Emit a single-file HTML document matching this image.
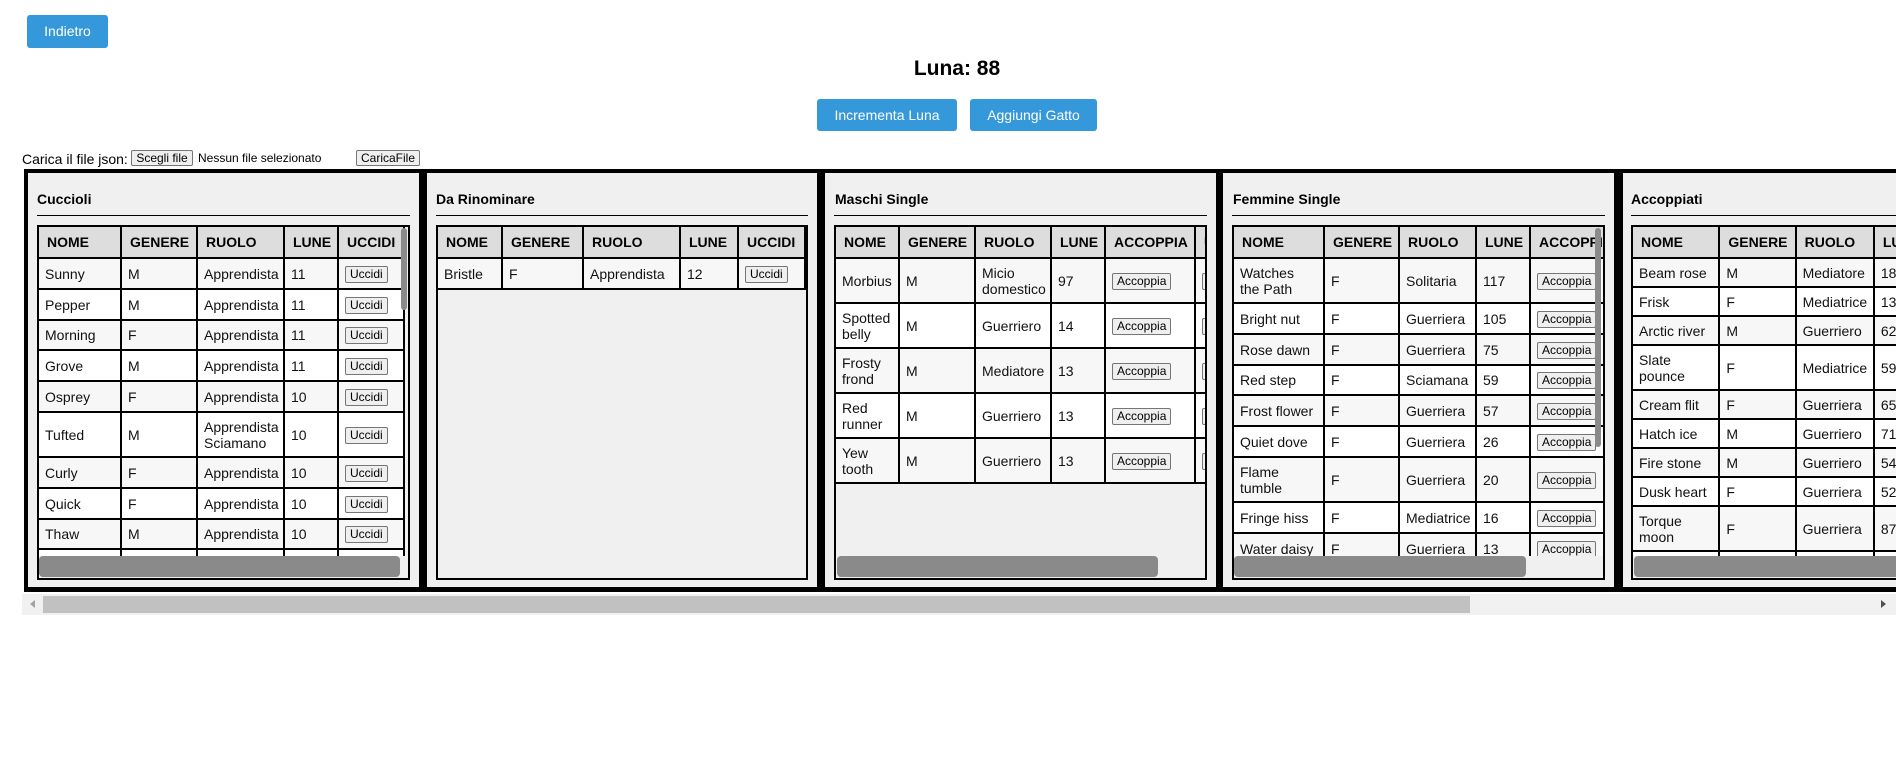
<!DOCTYPE html>
<html><head><meta charset="utf-8">
<style>
*{box-sizing:border-box}
body{margin:0;width:1896px;height:772px;overflow:hidden;background:#fff;font-family:"Liberation Sans",Arial,sans-serif;color:#000;position:relative}
.bb{position:absolute;background:#3498db;color:#fff;font-size:14px;border-radius:3px;text-align:center;line-height:32px}
.luna{position:absolute;left:0;width:1914px;top:57px;text-align:center;font-size:21px;font-weight:bold}
.frow{position:absolute;left:22px;top:151px;font-size:14px;line-height:16px}
.nb{position:absolute;top:150px;height:16px;border:1px solid #767676;background:#efefef;font-size:12px;line-height:14px;text-align:center;border-radius:2px}
.cont{position:absolute;left:24px;top:169px;width:1872px;height:423px;background:#000;overflow:hidden}
.panel{position:absolute;top:4px;height:414px;background:#f0f0f0}
.title{position:absolute;left:9px;top:19px;font-size:14px;font-weight:bold;line-height:15px}
.rule{position:absolute;left:9px;top:42px;height:1px;background:#000}
.wrap{position:absolute;left:9px;top:52px;height:355px;border:2px solid #000;background:#f0f0f0;overflow:hidden}
.sc{position:absolute;left:0;top:0;height:329px;overflow:hidden;width:100%}
table{border-collapse:separate;border-spacing:0;table-layout:fixed;font-size:14px}
th,td{border-right:2px solid #000;border-bottom:2px solid #000;white-space:nowrap;vertical-align:middle;text-align:left;overflow:hidden}
th{background:#ddd;padding:8px 8px 7px;font-weight:bold;line-height:15px}
td{padding:6px 6px 5px;color:#111;line-height:16px}
tbody tr:nth-child(odd) td{background:#f7f7f7}
tbody tr:nth-child(even) td{background:#fff}
.b{display:inline-block;vertical-align:middle;border:1px solid #767676;background:#efefef;font-size:12px;line-height:13px;padding:1px 4px;border-radius:2px;color:#000}
.hth{position:absolute;left:0;top:329px;height:21px;background:#8a8a8a;border-radius:4px}
.vth{position:absolute;right:1px;top:1px;width:6px;background:#8a8a8a;border-radius:3px}
</style></head><body>
<div class="bb" style="left:27px;top:15px;width:81px;height:33px;line-height:33px">Indietro</div>
<div class="luna">Luna: 88</div>
<div class="bb" style="left:817px;top:99px;width:140px;height:32px">Incrementa Luna</div>
<div class="bb" style="left:970px;top:99px;width:127px;height:32px">Aggiungi Gatto</div>
<div class="frow">Carica il file json:</div>
<div class="nb" style="left:131px;width:62px">Scegli file</div>
<div style="position:absolute;left:198px;top:151px;font-size:12px;line-height:14px">Nessun file selezionato</div>
<div class="nb" style="left:356px;width:64px">CaricaFile</div>

<div class="cont">
<div class="panel" style="left:4px;width:391px">
<div class="title">Cuccioli</div><div class="rule" style="width:373px"></div>
<div class="wrap" style="width:373px"><div class="sc">
<table style="width:366px"><colgroup><col style="width:83px"><col style="width:76px"><col style="width:87px"><col style="width:54px"><col style="width:66px"></colgroup>
<thead><tr><th>NOME</th><th>GENERE</th><th>RUOLO</th><th>LUNE</th><th>UCCIDI</th></tr></thead>
<tbody>
<tr><td>Sunny</td><td>M</td><td>Apprendista</td><td>11</td><td><span class="b">Uccidi</span></td></tr>
<tr><td>Pepper</td><td>M</td><td>Apprendista</td><td>11</td><td><span class="b">Uccidi</span></td></tr>
<tr><td>Morning</td><td>F</td><td>Apprendista</td><td>11</td><td><span class="b">Uccidi</span></td></tr>
<tr><td>Grove</td><td>M</td><td>Apprendista</td><td>11</td><td><span class="b">Uccidi</span></td></tr>
<tr><td>Osprey</td><td>F</td><td>Apprendista</td><td>10</td><td><span class="b">Uccidi</span></td></tr>
<tr><td>Tufted</td><td>M</td><td>Apprendista<br>Sciamano</td><td>10</td><td><span class="b">Uccidi</span></td></tr>
<tr><td>Curly</td><td>F</td><td>Apprendista</td><td>10</td><td><span class="b">Uccidi</span></td></tr>
<tr><td>Quick</td><td>F</td><td>Apprendista</td><td>10</td><td><span class="b">Uccidi</span></td></tr>
<tr><td>Thaw</td><td>M</td><td>Apprendista</td><td>10</td><td><span class="b">Uccidi</span></td></tr>
<tr><td>Bold</td><td>F</td><td>Apprendista</td><td>10</td><td><span class="b">Uccidi</span></td></tr>
</tbody></table></div>
<div class="vth" style="height:82px"></div>
<div class="hth" style="width:361px"></div>
</div></div>

<div class="panel" style="left:403px;width:390px">
<div class="title">Da Rinominare</div><div class="rule" style="width:372px"></div>
<div class="wrap" style="width:372px"><div class="sc">
<table style="width:368px"><colgroup><col style="width:65px"><col style="width:81px"><col style="width:97px"><col style="width:58px"><col style="width:67px"></colgroup>
<thead><tr><th>NOME</th><th>GENERE</th><th>RUOLO</th><th>LUNE</th><th>UCCIDI</th></tr></thead>
<tbody><tr><td>Bristle</td><td>F</td><td>Apprendista</td><td>12</td><td><span class="b">Uccidi</span></td></tr></tbody></table></div>
</div></div>

<div class="panel" style="left:801px;width:391px">
<div class="title" style="left:10px">Maschi Single</div><div class="rule" style="width:373px"></div>
<div class="wrap" style="width:373px"><div class="sc">
<table style="width:430px"><colgroup><col style="width:64px"><col style="width:76px"><col style="width:76px"><col style="width:54px"><col style="width:90px"><col style="width:70px"></colgroup>
<thead><tr><th>NOME</th><th>GENERE</th><th>RUOLO</th><th>LUNE</th><th>ACCOPPIA</th><th>UCCIDI</th></tr></thead>
<tbody>
<tr><td>Morbius</td><td>M</td><td>Micio<br>domestico</td><td>97</td><td><span class="b">Accoppia</span></td><td><span class="b">Uccidi</span></td></tr>
<tr><td>Spotted<br>belly</td><td>M</td><td>Guerriero</td><td>14</td><td><span class="b">Accoppia</span></td><td><span class="b">Uccidi</span></td></tr>
<tr><td>Frosty<br>frond</td><td>M</td><td>Mediatore</td><td>13</td><td><span class="b">Accoppia</span></td><td><span class="b">Uccidi</span></td></tr>
<tr><td>Red<br>runner</td><td>M</td><td>Guerriero</td><td>13</td><td><span class="b">Accoppia</span></td><td><span class="b">Uccidi</span></td></tr>
<tr><td>Yew<br>tooth</td><td>M</td><td>Guerriero</td><td>13</td><td><span class="b">Accoppia</span></td><td><span class="b">Uccidi</span></td></tr>
</tbody></table></div>
<div class="hth" style="left:1px;width:321px"></div>
</div></div>

<div class="panel" style="left:1199px;width:391px">
<div class="title" style="left:10px">Femmine Single</div><div class="rule" style="width:373px"></div>
<div class="wrap" style="width:373px"><div class="sc">
<table style="width:457px"><colgroup><col style="width:91px"><col style="width:75px"><col style="width:77px"><col style="width:54px"><col style="width:90px"><col style="width:70px"></colgroup>
<thead><tr><th>NOME</th><th>GENERE</th><th>RUOLO</th><th>LUNE</th><th>ACCOPPIA</th><th>UCCIDI</th></tr></thead>
<tbody>
<tr><td>Watches<br>the Path</td><td>F</td><td>Solitaria</td><td>117</td><td><span class="b">Accoppia</span></td><td><span class="b">Uccidi</span></td></tr>
<tr><td>Bright nut</td><td>F</td><td>Guerriera</td><td>105</td><td><span class="b">Accoppia</span></td><td><span class="b">Uccidi</span></td></tr>
<tr><td>Rose dawn</td><td>F</td><td>Guerriera</td><td>75</td><td><span class="b">Accoppia</span></td><td><span class="b">Uccidi</span></td></tr>
<tr><td>Red step</td><td>F</td><td>Sciamana</td><td>59</td><td><span class="b">Accoppia</span></td><td><span class="b">Uccidi</span></td></tr>
<tr><td>Frost flower</td><td>F</td><td>Guerriera</td><td>57</td><td><span class="b">Accoppia</span></td><td><span class="b">Uccidi</span></td></tr>
<tr><td>Quiet dove</td><td>F</td><td>Guerriera</td><td>26</td><td><span class="b">Accoppia</span></td><td><span class="b">Uccidi</span></td></tr>
<tr><td>Flame<br>tumble</td><td>F</td><td>Guerriera</td><td>20</td><td><span class="b">Accoppia</span></td><td><span class="b">Uccidi</span></td></tr>
<tr><td>Fringe hiss</td><td>F</td><td>Mediatrice</td><td>16</td><td><span class="b">Accoppia</span></td><td><span class="b">Uccidi</span></td></tr>
<tr><td>Water daisy</td><td>F</td><td>Guerriera</td><td>13</td><td><span class="b">Accoppia</span></td><td><span class="b">Uccidi</span></td></tr>
<tr><td>Sun fall</td><td>F</td><td>Guerriera</td><td>12</td><td><span class="b">Accoppia</span></td><td><span class="b">Uccidi</span></td></tr>
</tbody></table></div>
<div class="vth" style="height:219px;right:2px"></div>
<div class="hth" style="left:0;width:292px"></div>
</div></div>

<div class="panel" style="left:1599px;width:420px">
<div class="title" style="left:8px">Accoppiati</div><div class="rule" style="left:8px;width:400px"></div>
<div class="wrap" style="left:8px;width:400px"><div class="sc">
<table style="width:500px"><colgroup><col style="width:86px"><col style="width:75px"><col style="width:77px"><col style="width:54px"><col style="width:100px"><col style="width:100px"></colgroup>
<thead><tr><th>NOME</th><th>GENERE</th><th>RUOLO</th><th>LUNE</th><th>PARTNER</th><th>UCCIDI</th></tr></thead>
<tbody>
<tr><td>Beam rose</td><td>M</td><td>Mediatore</td><td>180</td><td></td><td></td></tr>
<tr><td>Frisk</td><td>F</td><td>Mediatrice</td><td>134</td><td></td><td></td></tr>
<tr><td>Arctic river</td><td>M</td><td>Guerriero</td><td>62</td><td></td><td></td></tr>
<tr><td>Slate<br>pounce</td><td>F</td><td>Mediatrice</td><td>59</td><td></td><td></td></tr>
<tr><td>Cream flit</td><td>F</td><td>Guerriera</td><td>65</td><td></td><td></td></tr>
<tr><td>Hatch ice</td><td>M</td><td>Guerriero</td><td>71</td><td></td><td></td></tr>
<tr><td>Fire stone</td><td>M</td><td>Guerriero</td><td>54</td><td></td><td></td></tr>
<tr><td>Dusk heart</td><td>F</td><td>Guerriera</td><td>52</td><td></td><td></td></tr>
<tr><td>Torque<br>moon</td><td>F</td><td>Guerriera</td><td>87</td><td></td><td></td></tr>
<tr><td>Ash</td><td>M</td><td>Guerriero</td><td>40</td><td></td><td></td></tr>
</tbody></table></div>
<div class="hth" style="left:1px;width:380px"></div>
</div></div>
</div>

<div style="position:absolute;left:22px;top:594px;width:1874px;height:21px;background:#f1f1f1"></div>
<div style="position:absolute;left:30px;top:600px;width:0;height:0;border-top:4px solid transparent;border-bottom:4px solid transparent;border-right:5px solid #a3a3a3"></div>
<div style="position:absolute;left:43px;top:596px;width:1427px;height:17px;background:#c1c1c1"></div>
<div style="position:absolute;left:1881px;top:600px;width:0;height:0;border-top:4px solid transparent;border-bottom:4px solid transparent;border-left:5px solid #505050"></div>
</body></html>
